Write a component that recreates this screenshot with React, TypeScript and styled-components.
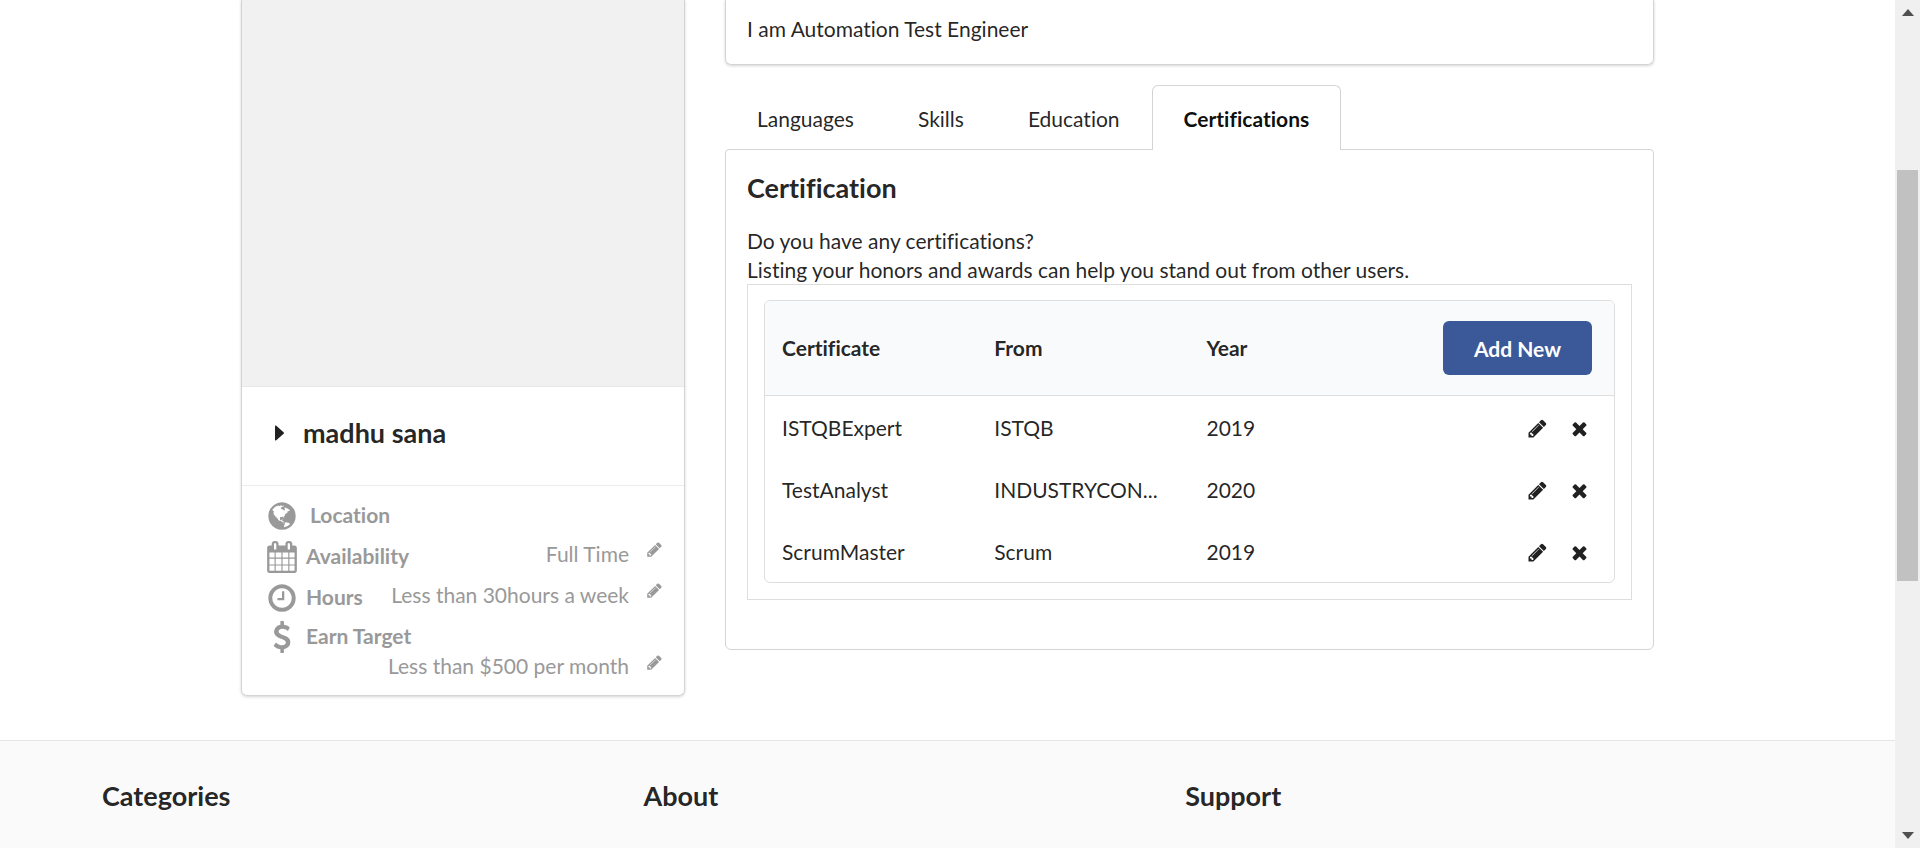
import React from "react";
import styled, { createGlobalStyle } from "styled-components";

const ink = "rgba(0, 0, 0, 0.87)";
const muted = "#999";
const line = "#dededf";
const cardLine = "#d4d4d5";

const GlobalStyle = createGlobalStyle`
  *, *::before, *::after { box-sizing: border-box; }
  body {
    margin: 0;
    background: #fff;
    color: ${ink};
    font-family: Lato, "Liberation Sans", sans-serif;
    font-size: 21px;
    line-height: 30px;
    font-variant-ligatures: no-common-ligatures;
  }
  h2, h3, p { margin: 0; }
  button { font: inherit; font-variant-ligatures: inherit; color: inherit; cursor: pointer; }
`;

const Window = styled.div`
  display: grid;
  grid-template-columns: minmax(0, 1fr) 25px;
  min-height: 100vh;
`;

const Page = styled.div`
  display: flex;
  flex-direction: column;
`;

const Main = styled.main`
  display: flex;
  align-items: flex-start;
  gap: 40px;
  width: 100%;
  max-width: 1413px;
  margin: 0 auto;
  padding-bottom: 44px;
`;

const ProfileCard = styled.aside`
  flex: 0 0 444px;
  border: 1px solid ${cardLine};
  border-top: 0;
  border-radius: 0 0 6px 6px;
  box-shadow: 0 1px 3px ${cardLine};
`;

const Photo = styled.div`
  height: 387px;
  background: #f1f1f1;
  border-bottom: 1px solid #e8e8e8;
`;

const NameRow = styled.div`
  display: flex;
  align-items: center;
  gap: 19px;
  padding: 28px 33px 34px;
  border-bottom: 1px solid #ececec;
`;

const NameHeading = styled.h2`
  font-size: 27px;
  line-height: 36px;
  font-weight: 700;
`;

const Details = styled.div`
  padding: 9px 21px 10px 24px;
  color: ${muted};
`;

const DetailRow = styled.div<{ $stacked?: boolean }>`
  display: flex;
  flex-wrap: ${(p) => (p.$stacked ? "wrap" : "nowrap")};
  align-items: center;
  min-height: 41px;
  padding-top: ${(p) => (p.$stacked ? 3 : 0)}px;
`;

const DetailLabel = styled.span<{ $wide?: boolean }>`
  margin-left: ${(p) => (p.$wide ? 12 : 8)}px;
  padding-bottom: 2px;
  font-weight: 700;
`;

const DetailValue = styled.span<{ $full?: boolean }>`
  display: flex;
  flex: ${(p) => (p.$full ? "0 0 100%" : "0 1 auto")};
  justify-content: flex-end;
  gap: 17px;
  margin-left: auto;
  padding-bottom: 6px;
  line-height: ${(p) => (p.$full ? 26 : 30)}px;
`;

const IconButton = styled.button<{ $raised?: boolean }>`
  display: inline-flex;
  align-items: center;
  justify-content: center;
  padding: 0 0 ${(p) => (p.$raised ? 8 : 0)}px;
  border: 0;
  background: none;
`;

const Content = styled.div`
  flex: 1;
  min-width: 0;
`;

const DescriptionCard = styled.section`
  padding: 14px 21px 20px;
  border: 1px solid ${cardLine};
  border-top: 0;
  border-radius: 0 0 6px 6px;
  box-shadow: 0 1px 3px ${cardLine};
`;

const Tabs = styled.div`
  display: flex;
  margin-top: 20px;
`;

const Tab = styled.button<{ $active?: boolean }>`
  position: relative;
  margin-bottom: -1px;
  padding: 18px 31px 16px;
  border: 1px solid ${(p) => (p.$active ? cardLine : "transparent")};
  border-bottom: 0;
  border-radius: 6px 6px 0 0;
  background: ${(p) => (p.$active ? "#fff" : "none")};
  color: ${(p) => (p.$active ? "rgba(0, 0, 0, 0.95)" : ink)};
  font-weight: ${(p) => (p.$active ? 700 : 400)};
`;

const Panel = styled.section`
  padding: 20px 21px 49px;
  border: 1px solid ${cardLine};
  border-radius: 4px 4px 6px 6px;
`;

const PanelTitle = styled.h3`
  margin-bottom: 21px;
  font-size: 27px;
  line-height: 35px;
  font-weight: 700;
`;

const Intro = styled.p`
  line-height: 29px;
`;

const Segment = styled.div`
  padding: 15px 16px 16px;
  border: 1px solid ${line};
`;

const CertTable = styled.table`
  width: 100%;
  table-layout: fixed;
  border: 1px solid ${line};
  border-radius: 6px;
  border-spacing: 0;
  overflow: hidden;
`;

const HeadCell = styled.th<{ $right?: boolean }>`
  padding: 20px ${(p) => (p.$right ? 22 : 17)}px 20px 17px;
  border-bottom: 1px solid ${line};
  background: #f9fafc;
  text-align: ${(p) => (p.$right ? "right" : "left")};
  font-weight: 700;
`;

const Cell = styled.td`
  padding: 17px 17px 15px;
`;

const Actions = styled.div`
  display: flex;
  justify-content: flex-end;
  gap: 21px;
  padding-right: 7px;
`;

const AddButton = styled.button`
  display: block;
  width: 149px;
  height: 54px;
  margin-left: auto;
  padding: 2px 0 0;
  border: 0;
  border-radius: 6px;
  background: #3b5998;
  color: #fff;
  font-weight: 700;
`;

const Footer = styled.footer`
  flex: 1;
  padding: 39px 0 35px;
  border-top: 1px solid #e5e5e5;
  background: #fafafa;
`;

const FooterGrid = styled.div`
  display: grid;
  grid-template-columns: repeat(3, 5fr) 1fr;
  max-width: 1733px;
  margin: 0 auto;
`;

const FooterHeading = styled.h3`
  padding: 0 21px;
  font-size: 27px;
  line-height: 32px;
  font-weight: 700;
`;

const ScrollTrack = styled.div`
  display: flex;
  flex-direction: column;
  align-items: center;
  padding: 9px 0;
  background: #f0f0f0;
  color: #505050;
`;

const ScrollRail = styled.div`
  display: flex;
  flex: 1;
  flex-direction: column;
  width: 21px;
`;

const RailPart = styled.div<{ $grow: number; $thumb?: boolean }>`
  flex: ${(p) => p.$grow};
  background: ${(p) => (p.$thumb ? "#c1c1c1" : "none")};
`;

const icons = {
  globe:
    "M896 128q209 0 385.5 103t279.5 279.5 103 385.5-103 385.5-279.5 279.5-385.5 103-385.5-103-279.5-279.5-103-385.5 103-385.5 279.5-279.5 385.5-103zm274 521q-2 1-9.5 9.5t-13.5 9.5q2 0 4.5-5t5-11 3.5-7q6-7 22-15 14-6 52-12 34-8 51 11-2-2 9.5-13t14.5-12q3-2 15-4.5t15-7.5l2-22q-12 1-17.5-7t-6.5-21q0 2-6 8 0-7-4.5-8t-11.5 1-9 1q-10-3-15-7.5t-8-16.5-4-15q-2-5-9.5-11t-9.5-10q-1-2-2.5-5.5t-3-6.5-4-5.5-5.5-2.5-7 5-7.5 10-4.5 5q-3-2-6-1.5t-4.5 1-4.5 3-5 3.5q-3 2-8.5 3t-8.5 2q15-5-1-11-10-4-16-3 9-4 7.5-12t-8.5-14h5q-1-4-8.5-8.5t-17.5-8.5-13-6q-8-5-34-9.5t-33-.5q-5 6-4.5 10.5t4 14 3.5 12.5q1 6-5.5 13t-6.5 12q0 7 14 15.5t10 21.5q-3 8-16 16t-16 12q-5 8-1.5 18.5t10.5 16.5q2 2 1.5 4t-3.5 4.5-5.5 4-6.5 3.5l-3 2q-11 5-20.5-6t-13.5-26q-7-25-16-30-23-8-29 1-5-13-41-26-25-9-58-4 6-1 0-15-7-15-19-12 3-6 4-17.5t1-13.5q3-13 12-23 1-1 7-8.5t9.5-13.5.5-6q35 4 50-11 5-5 11.5-17t10.5-17q9-6 14-5.5t14.5 5.5 14.5 5q14 1 15.5-11t-7.5-20q12 1 3-17-4-7-8-9-12-4-27 5-8 4 2 8-1-1-9.5 10.5t-16.5 17.5-16-5q-1-1-5.5-13.5t-9.5-13.5q-8 0-16 15 3-8-11-15t-24-8q19-12-8-27-7-4-20.5-5t-19.5 4q-5 7-5.5 11.5t5 8 10.5 5.5 11.5 4 8.5 3q14 10 8 14-2 1-8.5 3.5t-11.5 4.5-6 4q-3 4 0 14t-2 14q-5-5-9-17.5t-7-16.5q7 9-25 6l-10-1q-4 0-16 2t-20.5 1-13.5-8q-4-8 0-20 1-4 4-2-4-3-11-9.5t-10-8.5q-46 15-94 41 6 1 12-1 5-2 13-6.5t10-5.5q34-14 42-7l5-5q14 16 20 25-7-4-30-1-20 6-22 12 7 12 5 18-4-3-11.5-10t-14.5-11-15-5q-16 0-22 1-146 80-235 222 7 7 12 8 4 1 5 9t2.5 11 11.5-3q9 8 3 19 1-1 44 27 19 17 21 21 3 11-10 18-1-2-9-9t-9-4q-3 5 .5 18.5t10.5 12.5q-7 0-9.5 16t-2.5 35.5-1 23.5l2 1q-3 12 5.5 34.5t21.5 19.5q-13 3 20 43 6 8 8 9 3 2 12 7.5t15 10 10 10.5q4 5 10 22.5t14 23.5q-2 6 9.5 20t10.5 23q-1 0-2.5 1t-2.5 1q3 7 15.5 14t15.5 13q1 3 2 10t3 11 8 2q2-20-24-62-15-25-17-29-3-5-5.5-15.5t-4.5-14.5q2 0 6 1.5t8.5 3.5 7.5 4 2 3q-3 7 2 17.5t12 18.5 17 19 12 13q6 6 14 19.5t0 13.5q9 0 20 10t17 20q5 8 8 26t5 24q2 7 8.5 13.5t12.5 9.5l16 8 13 7q5 2 18.5 10.5t21.5 11.5q10 4 16 4t14.5-2.5 13.5-3.5q15-2 29 15t21 21q36 19 55 11-2 1 .5 7.5t8 15.5 9 14.5 5.5 8.5q5 6 18 15t18 15q6-4 7-9-3 8 7 20t18 10q14-3 14-32-31 15-49-18 0-1-2.5-5.5t-4-8.5-2.5-8.5 0-7.5 5-3q9 0 10-3.5t-2-12.5-4-13q-1-8-11-20t-12-15q-5 9-16 8t-16-9q0 1-1.5 5.5t-1.5 6.5q-13 0-15-1 1-3 2.5-17.5t3.5-22.5q1-4 5.5-12t7.5-14.5 4-12.5-4.5-9.5-17.5-2.5q-19 1-26 20-1 3-3 10.5t-5 11.5-9 7q-7 3-24 2t-24-5q-13-8-22.5-29t-9.5-37q0-10 2.5-26.5t3-25-5.5-24.5q3-2 9-9.5t10-10.5q2-1 4.5-1.5t4.5 0 4-1.5 3-6q-1-1-4-3-3-3-4-3 7 3 28.5-1.5t27.5 1.5q15 11 22-2 0-1-2.5-9.5t-.5-13.5q5 27 29 9 3 3 15.5 5t17.5 5q3 2 7 5.5t5.5 4.5 5-.5 8.5-6.5q10 14 12 24 11 40 19 44 7 3 11 2t4.5-9.5 0-14-1.5-12.5l-1-8v-18l-1-8q-15-3-18.5-12t1.5-18.5 15-18.5q1-1 8-3.5t15.5-6.5 12.5-8q21-19 15-35 7 0 11-9-1 0-5-3t-7.5-5-4.5-2q9-5 2-16 5-3 7.5-11t7.5-10q9 12 21 2 8-8 1-16 5-7 20.5-10.5t18.5-9.5q7 2 8-2t1-12 3-12q4-5 15-9t13-5l17-11q3-4 0-4 18 2 31-11 10-11-6-20 3-6-3-9.5t-15-5.5q3-1 11.5-.5t10.5-1.5q15-10-7-16-17-5-43 12zm-163 877q206-36 351-189-3-3-12.5-4.5t-12.5-3.5q-18-7-24-8 1-7-2.5-13t-8-9-12.5-8-11-7q-2-2-7-6t-7-5.5-7.5-4.5-8.5-2-10 1l-3 1q-3 1-5.5 2.5t-5.5 3-4 3 0 2.5q-21-17-36-22-5-1-11-5.5t-10.5-7-10-1.5-11.5 7q-5 5-6 15t-2 13q-7-5 0-17.5t2-18.5q-3-6-10.5-4.5t-12 4.5-11.5 8.5-9 6.5-8.5 5.5-8.5 7.5q-3 4-6 12t-5 11q-2-4-11.5-6.5t-9.5-5.5q2 10 4 35t5 38q7 31-12 48-27 25-29 40-4 22 12 26 0 7-8 20.5t-7 21.5q0 6 2 16z",
  calendar:
    "M192 1664h288v-288h-288v288zm352 0h320v-288h-320v288zm-352-352h288v-320h-288v320zm352 0h320v-320h-320v320zm-352-384h288v-288h-288v288zm736 736h320v-288h-320v288zm-384-736h320v-288h-320v288zm768 736h288v-288h-288v288zm-384-352h320v-320h-320v320zm-352-864v-288q0-13-9.5-22.5t-22.5-9.5h-64q-13 0-22.5 9.5t-9.5 22.5v288q0 13 9.5 22.5t22.5 9.5h64q13 0 22.5-9.5t9.5-22.5zm736 864h288v-320h-288v320zm-384-384h320v-288h-320v288zm384 0h288v-288h-288v288zm32-480v-288q0-13-9.5-22.5t-22.5-9.5h-64q-13 0-22.5 9.5t-9.5 22.5v288q0 13 9.5 22.5t22.5 9.5h64q13 0 22.5-9.5t9.5-22.5zm384-64v1280q0 52-38 90t-90 38h-1408q-52 0-90-38t-38-90v-1280q0-52 38-90t90-38h128v-96q0-66 47-113t113-47h64q66 0 113 47t47 113v96h384v-96q0-66 47-113t113-47h64q66 0 113 47t47 113v96h128q52 0 90 38t38 90z",
  clock:
    "M1024 544v448q0 14-9 23t-23 9h-320q-14 0-23-9t-9-23v-64q0-14 9-23t23-9h224v-352q0-14 9-23t23-9h64q14 0 23 9t9 23zm416 352q0-148-73-273t-198-198-273-73-273 73-198 198-73 273 73 273 198 198 273 73 273-73 198-198 73-273zm224 0q0 209-103 385.5t-279.5 279.5-385.5 103-385.5-103-279.5-279.5-103-385.5 103-385.5 279.5-279.5 385.5-103 385.5 103 279.5 279.5 103 385.5z",
  dollar:
    "M1362 1185q0 153-99.5 263.5t-258.5 136.5v175q0 14-9 23t-23 9h-135q-13 0-22.5-9.5t-9.5-22.5v-175q-66-9-127.5-31t-101.5-44.5-74-48-46.5-37.5-17.5-18q-17-21-2-41l103-135q7-10 23-12 15-2 24 9l2 2q113 99 243 125 37 8 74 8 81 0 142.5-43t61.5-122q0-28-15-53t-33.5-42-58.5-37.5-66-32-80-32.5q-39-16-61.5-25t-61.5-26.5-62.5-31-56.5-35.5-53.5-42.5-43.5-49-35.5-58-21-66.5-8.5-78q0-138 98-242t255-134v-180q0-13 9.5-22.5t22.5-9.5h135q14 0 23 9t9 23v176q57 6 110.5 23t87 33.5 63.5 37.5 39 29 15 14q17 18 5 38l-81 146q-8 15-23 16-14 3-27-7-3-3-14.5-12t-39-26.5-58.5-32-74.5-26-85.5-11.5q-95 0-155 43t-60 111q0 26 8.5 48t29.5 41.5 39.5 33 56 31 60.5 27 70 27.5q53 20 81 31.5t76 35 75.5 42.5 62 50 53 63.5 31.5 76.5 13 94z",
  pencil:
    "M491 1536l91-91-235-235-91 91v107h128v128h107zm523-928q0-22-22-22-10 0-17 7l-542 542q-7 7-7 17 0 22 22 22 10 0 17-7l542-542q7-7 7-17zm-54-192l416 416-832 832h-416v-416zm683 96q0 53-37 90l-166 166-416-416 166-165q36-38 90-38 53 0 91 38l235 234q37 39 37 91z",
  times:
    "M1490 1322q0 40-28 68l-136 136q-28 28-68 28t-68-28l-294-294-294 294q-28 28-68 28t-68-28l-136-136q-28-28-28-68t28-68l294-294-294-294q-28-28-28-68t28-68l136-136q28-28 68-28t68 28l294 294 294-294q28-28 68-28t68 28l136 136q28 28 28 68t-28 68l-294 294 294 294q28 28 28 68z",
};

const Svg = styled.svg`
  display: block;
  flex: none;
  fill: currentColor;
`;

function Icon({ name, size }: { name: keyof typeof icons; size: number }) {
  return (
    <Svg width={size} height={size} viewBox="0 0 1792 1792" aria-hidden="true">
      <path d={icons[name]} />
    </Svg>
  );
}

type Detail = {
  icon: keyof typeof icons;
  label: string;
  value?: string;
  stacked?: boolean;
};

const details: Detail[] = [
  { icon: "globe", label: "Location" },
  { icon: "calendar", label: "Availability", value: "Full Time" },
  { icon: "clock", label: "Hours", value: "Less than 30hours a week" },
  { icon: "dollar", label: "Earn Target", value: "Less than $500 per month", stacked: true },
];

const tabs = ["Languages", "Skills", "Education", "Certifications"];

const certificates = [
  { name: "ISTQBExpert", from: "ISTQB", year: 2019 },
  { name: "TestAnalyst", from: "INDUSTRYCON...", year: 2020 },
  { name: "ScrumMaster", from: "Scrum", year: 2019 },
];

export default function App() {
  return (
    <>
      <GlobalStyle />
      <Window>
        <Page>
          <Main>
            <ProfileCard>
              <Photo />
              <NameRow>
                <Svg width="9" height="16" viewBox="0 0 9 16" aria-hidden="true">
                  <path d="M0 1.2Q0 0 1 .6L8.6 7.2Q9.4 8 8.6 8.8L1 15.4Q0 16 0 14.8z" />
                </Svg>
                <NameHeading>madhu sana</NameHeading>
              </NameRow>
              <Details>
                {details.map((d) => (
                  <DetailRow key={d.label} $stacked={d.stacked}>
                    <Icon name={d.icon} size={32} />
                    <DetailLabel $wide={!d.value}>{d.label}</DetailLabel>
                    {d.value && (
                      <DetailValue $full={d.stacked}>
                        {d.value}
                        <IconButton $raised aria-label={`Edit ${d.label}`}>
                          <Icon name="pencil" size={17} />
                        </IconButton>
                      </DetailValue>
                    )}
                  </DetailRow>
                ))}
              </Details>
            </ProfileCard>
            <Content>
              <DescriptionCard>
                <p>I am Automation Test Engineer</p>
              </DescriptionCard>
              <Tabs role="tablist">
                {tabs.map((t) => (
                  <Tab key={t} role="tab" aria-selected={t === "Certifications"} $active={t === "Certifications"}>
                    {t}
                  </Tab>
                ))}
              </Tabs>
              <Panel role="tabpanel">
                <PanelTitle>Certification</PanelTitle>
                <Intro>
                  Do you have any certifications?
                  <br />
                  Listing your honors and awards can help you stand out from other users.
                </Intro>
                <Segment>
                  <CertTable>
                    <thead>
                      <tr>
                        <HeadCell>Certificate</HeadCell>
                        <HeadCell>From</HeadCell>
                        <HeadCell>Year</HeadCell>
                        <HeadCell $right>
                          <AddButton>Add New</AddButton>
                        </HeadCell>
                      </tr>
                    </thead>
                    <tbody>
                      {certificates.map((c) => (
                        <tr key={c.name}>
                          <Cell>{c.name}</Cell>
                          <Cell>{c.from}</Cell>
                          <Cell>{c.year}</Cell>
                          <Cell>
                            <Actions>
                              <IconButton aria-label={`Edit ${c.name}`}>
                                <Icon name="pencil" size={21} />
                              </IconButton>
                              <IconButton aria-label={`Delete ${c.name}`}>
                                <Icon name="times" size={21} />
                              </IconButton>
                            </Actions>
                          </Cell>
                        </tr>
                      ))}
                    </tbody>
                  </CertTable>
                </Segment>
              </Panel>
            </Content>
          </Main>
          <Footer>
            <FooterGrid>
              <FooterHeading>Categories</FooterHeading>
              <FooterHeading>About</FooterHeading>
              <FooterHeading>Support</FooterHeading>
            </FooterGrid>
          </Footer>
        </Page>
        <ScrollTrack aria-hidden="true">
          <Svg width="12" height="7" viewBox="0 0 12 7">
            <path d="M6 0l6 7H0z" />
          </Svg>
          <ScrollRail>
            <RailPart $grow={154} />
            <RailPart $grow={411} $thumb />
            <RailPart $grow={251} />
          </ScrollRail>
          <Svg width="12" height="7" viewBox="0 0 12 7">
            <path d="M0 0h12L6 7z" />
          </Svg>
        </ScrollTrack>
      </Window>
    </>
  );
}
